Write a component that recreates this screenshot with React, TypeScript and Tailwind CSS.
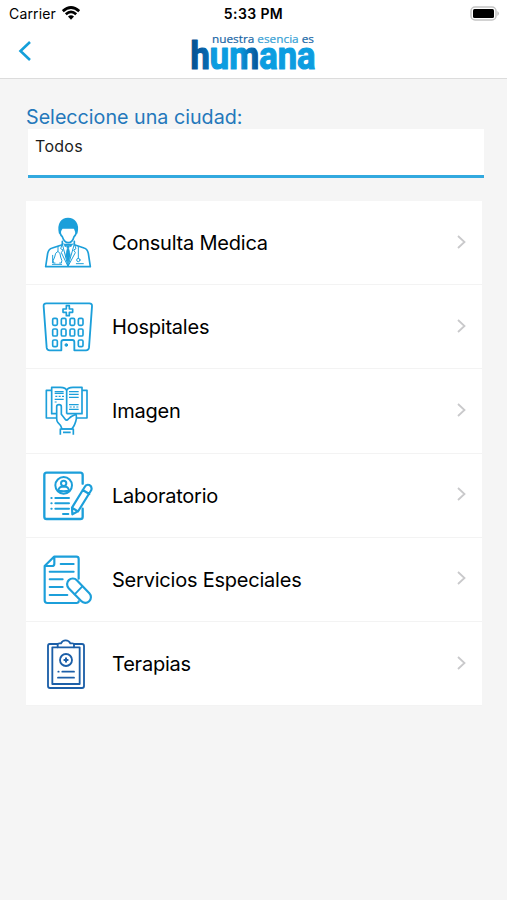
import type { ReactNode } from 'react';

const BLUE = '#1c9fda';
const NAVY = '#1c5fa8';

function DoctorIcon() {
  return (
    <svg viewBox="36 37 156 156" className="mt-0.5 size-[52px] overflow-visible" fill="none" stroke={BLUE} strokeWidth="5" strokeLinecap="round" strokeLinejoin="round">
      <path d="M89 82C83 53 96 39 114 39S147 53 140 82L137 76Q135 68 132 67L97 66Q91 72 89 82Z" fill={BLUE} />
      <path d="M90 76Q90 88 97 93Q103 111 115 111T132 93Q139 88 139 76" />
      <path d="M97 107V117L67 127Q56 130 53 143L47 183H181L175 143Q172 130 162 127L133 117V107" />
      <path d="M97 115L114 182L133 115M97 115L92 129L99 133L94 141L114 182M133 115L138 129L131 133L136 141L114 182" strokeWidth="3" />
      <path d="M101 114L106 124L109 119H119L122 124L129 114M109 120L112 128L107 149L114 174L121 149L116 128L119 120Z" fill={BLUE} strokeWidth="2" />
      <path d="M84 122V137Q75 140 74 154Q67 166 70 172H75M84 137Q92 140 92 154Q98 166 94 172H89M145 122V158M68 149V171" strokeWidth="3" />
      <circle cx="145" cy="163" r="5" strokeWidth="3" />
      <path d="M67 176H95M139 174H160" strokeWidth="3" />
    </svg>
  );
}

function HospitalIcon() {
  return (
    <svg viewBox="36 35 156 156" className="mt-0.5 size-[52px] overflow-visible" fill="none" stroke={BLUE} strokeWidth="5.5" strokeLinejoin="round">
      <path d="M94 180H59Q51 180 50 172L41 48Q40 39 49 39H178Q187 39 186 48L177 172Q176 180 168 180H133V155Q133 149 127 149H101Q94 149 94 155Z" />
      <path d="M109 46H118V56H128V66H118V76H109V66H99V56H109Z" strokeWidth="5" />
      {[68, 94, 120, 145].map((x) => (
        <g key={x} strokeWidth="5">
          <rect x={x} y="84" width="14" height="21" rx="4" />
          <rect x={x} y="116" width="14" height="21" rx="4" />
        </g>
      ))}
      <rect x="68" y="149" width="14" height="20" rx="4" strokeWidth="5" />
      <rect x="145" y="149" width="14" height="20" rx="4" strokeWidth="5" />
      <circle cx="109" cy="164" r="4" fill={BLUE} strokeWidth="3" />
    </svg>
  );
}

function BookIcon() {
  return (
    <svg viewBox="36 39 156 156" className="mt-0.5 size-[52px] overflow-visible" fill="none" stroke={BLUE} strokeWidth="5" strokeLinejoin="round">
      <path d="M65 52H49V135H78M156 52H171V135H141" />
      <path d="M78 122H65V43H91Q108 43 110 53Q112 43 129 43H156V122H110M110 53V122" />
      <path d="M74 56H101M74 61H101M76 70H82M86 70H92M96 70H102M74 79H101M74 87H80M117 56H146M117 64H146M117 73H146M117 95H146M119 102H125M129 102H135M139 102H145M117 109H146" strokeWidth="3.5" />
      <path d="M80 137V101Q80 95 87 95T94 101V124L105 138Q110 145 115 138Q124 129 138 124Q142 136 134 154Q131 162 125 168H96Q92 155 84 149Q80 144 80 137Z" fill="white" />
      <path d="M91 185V168H130V185M99 178H122" />
    </svg>
  );
}

function LabIcon() {
  return (
    <svg viewBox="36 37 156 156" className="mt-0.5 size-[52px] overflow-visible" fill="none" stroke={BLUE} strokeWidth="7" strokeLinecap="round" strokeLinejoin="round">
      <path d="M158 75V49Q158 42 151 42H50Q43 42 43 49V174Q43 181 50 181H151Q158 181 158 174V150" />
      <circle cx="101" cy="80" r="25" strokeWidth="6" />
      <circle cx="101" cy="74" r="8" strokeWidth="6" />
      <path d="M85 96Q87 84 96 84H106Q115 84 117 96Q101 99 85 96" strokeWidth="6" />
      <path d="M64 118H65M64 134H65M64 150H65M76 118H117M76 134H117M76 150H117M99 166H115" strokeWidth="6" />
      <path d="M126 147L164 85Q168 76 178 79Q187 84 184 94L145 157L127 167ZM158 94L178 106M127 148L144 158" fill="white" strokeWidth="6.5" />
    </svg>
  );
}

function ServicesIcon() {
  return (
    <svg viewBox="36 37 156 156" className="mt-0.5 size-[52px] overflow-visible" fill="none" stroke={BLUE} strokeWidth="6.5" strokeLinecap="round" strokeLinejoin="round">
      <path d="M146 108V49Q146 42 139 42H72L44 70V173Q44 181 52 181H140Q146 181 146 176M44 70H66Q73 70 73 63V42" />
      <path d="M92 64H131M59 87H131M59 110H98M59 133H98M59 157H112" strokeWidth="6" />
      <rect x="103" y="127" width="88" height="34" rx="17" transform="rotate(46 147 144)" fill="white" />
      <path d="M134 155L157 131" strokeWidth="5.5" />
    </svg>
  );
}

function ClipboardIcon() {
  return (
    <svg viewBox="36 35 156 156" className="mt-0.5 size-[52px] overflow-visible" fill="none" stroke={NAVY} strokeWidth="5.5" strokeLinecap="round" strokeLinejoin="round">
      <path d="M83 50H59Q54 50 54 56V176Q54 182 60 182H156Q162 182 162 176V56Q162 50 156 50H132" />
      <path d="M83 60H67V170H149V60H132" />
      <path d="M83 60V51Q83 48 88 48H93Q97 39 107 39T121 48H127Q132 48 132 51V60Z" />
      <circle cx="108" cy="98" r="18" />
      <path d="M108 93V103M103 98H113" strokeWidth="6" />
      <path d="M85 133H86M97 133H132M84 151H132" />
    </svg>
  );
}

function Logo() {
  return (
    <svg width="126" height="40" viewBox="0 0 126 40" className="overflow-visible">
      <defs>
        <linearGradient id="humana" gradientUnits="userSpaceOnUse" x1="0" y1="0" x2="126" y2="0">
          <stop offset="0" stopColor="#064f8f" />
          <stop offset="0.12" stopColor="#0866ad" />
          <stop offset="0.15" stopColor="#0866ad" />
          <stop offset="0.17" stopColor="#0c9de0" />
          <stop offset="0.38" stopColor="#0c9de0" />
          <stop offset="0.46" stopColor="#0876bd" />
          <stop offset="0.54" stopColor="#075090" />
          <stop offset="0.55" stopColor="#0c9de0" />
          <stop offset="1" stopColor="#0c9de0" />
        </linearGradient>
      </defs>
      <text x="21" y="11" textLength="102" lengthAdjust="spacingAndGlyphs" fontFamily='"Open Sans", sans-serif' fontSize="11.5" fill="#1765a5" stroke="#1765a5" strokeWidth="0.2">
        nuestra <tspan fill="#35a0d4" stroke="#35a0d4">esencia</tspan> es
      </text>
      <text x="-0.5" y="37.3" textLength="125" lengthAdjust="spacingAndGlyphs" fontFamily="Roboto, sans-serif" fontSize="38" fontWeight="700" fill="url(#humana)" stroke="url(#humana)" strokeWidth="1.2" strokeLinejoin="round">
        humana
      </text>
    </svg>
  );
}

const SERVICES: { label: string; icon: ReactNode }[] = [
  { label: 'Consulta Medica', icon: <DoctorIcon /> },
  { label: 'Hospitales', icon: <HospitalIcon /> },
  { label: 'Imagen', icon: <BookIcon /> },
  { label: 'Laboratorio', icon: <LabIcon /> },
  { label: 'Servicios Especiales', icon: <ServicesIcon /> },
  { label: 'Terapias', icon: <ClipboardIcon /> },
];

function StatusBar() {
  return (
    <div className="grid h-7 grid-cols-3 items-center pr-[7px] pb-px pl-[9px] text-[14px]">
      <div className="flex items-center gap-1.5">
        <span className="tracking-[0.15px]">Carrier</span>
        <svg width="18" height="14" viewBox="0 0 18 14" className="-mt-0.5" fill="none" stroke="black" strokeWidth="2.7">
          <path d="M0.8 5.2Q9-2.2 17.2 5.2M3.8 8.3Q9 3.6 14.2 8.3" />
          <path d="M6 10.6Q9 8 12 10.6L9 13.7Z" fill="black" stroke="none" />
        </svg>
      </div>
      <span className="-ml-0.5 text-center font-semibold tracking-[0.4px]">5:33 PM</span>
      <svg width="30" height="15" viewBox="0 0 30 15" className="-mt-px ml-auto">
        <rect x="1" y="1" width="25" height="13" rx="4" fill="white" stroke="#c4c4c4" strokeWidth="1.5" />
        <rect x="3" y="3" width="21" height="9" rx="1.5" fill="black" />
        <path d="M27.5 5Q30 7.5 27.5 10Z" fill="#aaa" />
      </svg>
    </div>
  );
}

export default function App() {
  return (
    <div className="h-[900px] w-[507px] overflow-hidden bg-[#f5f5f5] font-['Inter','Liberation_Sans',sans-serif] text-black">
      <header className="h-[79px] border-b border-[#dcdcdc] bg-white">
        <StatusBar />
        <div className="grid grid-cols-[1fr_126px_1fr] items-start pt-1">
          <button className="mt-[9px] ml-[18px] w-fit" aria-label="Atrás">
            <svg width="14" height="20" viewBox="0 0 14 20" fill="none" stroke="#139fda" strokeWidth="2.6">
              <path d="M12 1L2.5 10L12 19" />
            </svg>
          </button>
          <Logo />
        </div>
      </header>

      <main className="pt-[26px] pr-[23px] pl-[26px]">
        <h1 className="h-6 text-[19.7px] leading-6 text-[#2478bb]">Seleccione una ciudad:</h1>
        <div className="ml-0.5 h-[49px] border-b-[3px] border-[#32a9df] bg-white px-[7px] pt-[5px] text-base leading-6 tracking-[0.3px] text-[#1c1c1c]">
          Todos
        </div>

        <ul className="mt-[23px] mr-[2.5px] bg-white">
          {SERVICES.map(({ label, icon }) => (
            <li key={label} className="flex h-[84.2px] items-center border-b border-[#f3f3f3] px-4 pt-px">
              {icon}
              <span className="ml-[18px] text-[20px] tracking-[-0.22px]">{label}</span>
              <svg width="9" height="14" viewBox="0 0 9 14" className="mb-[3px] ml-auto" fill="none" stroke="#c9c9cb" strokeWidth="1.8">
                <path d="M1 1L7.5 7L1 13" />
              </svg>
            </li>
          ))}
        </ul>
      </main>
    </div>
  );
}
